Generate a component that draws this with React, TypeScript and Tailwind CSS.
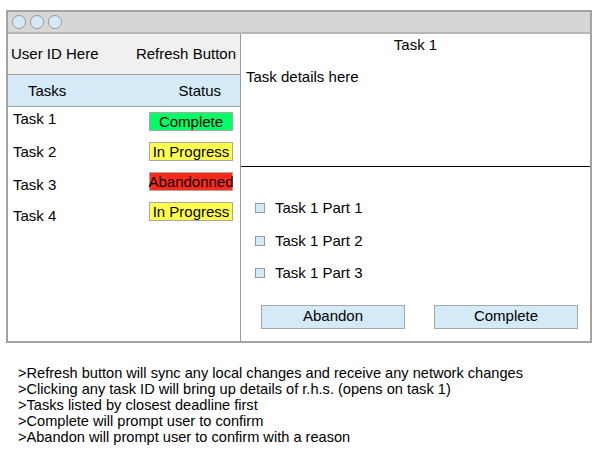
import React from "react";

const font = { fontFamily: '"Liberation Sans", Arial, Helvetica, sans-serif' };

const tasks = [
  { name: "Task 1", status: "Complete", cls: "bg-[#00ff66]", off: -2 },
  { name: "Task 2", status: "In Progress", cls: "bg-[#ffff4d]", off: 1 },
  { name: "Task 3", status: "Abandonned", cls: "bg-[#ff2a1a]", off: 4 },
  { name: "Task 4", status: "In Progress", cls: "bg-[#ffff4d]", off: 5 },
];

export default function App() {
  return (
    <div className="w-[598px] h-[457px] bg-white text-black relative overflow-hidden" style={font}>
      <div className="pt-[10px] pl-[6px]">
        <div className="w-[586px] h-[333px] border-2 border-[#a3a3a3] flex flex-col">
          {/* title bar */}
          <div className="h-[22px] bg-[#d6d6d6] border-b-2 border-[#b7b7b7] flex items-center gap-[4px] pl-[4px] shrink-0">
            <div className="w-[14px] h-[14px] rounded-full bg-[#d4eaf7] border border-[#9a9a9a]" />
            <div className="w-[14px] h-[14px] rounded-full bg-[#d4eaf7] border border-[#9a9a9a]" />
            <div className="w-[14px] h-[14px] rounded-full bg-[#d4eaf7] border border-[#9a9a9a]" />
          </div>
          <div className="flex flex-1 min-h-0">
            {/* left panel */}
            <div className="w-[233px] border-r-[1.5px] border-[#9a9a9a] flex flex-col shrink-0">
              <div className="h-[41px] bg-[#f0f0f0] border-b border-[#a0a0a0] flex items-center justify-between pl-[3px] pr-[4px] text-[15px]">
                <span>User ID Here</span>
                <span>Refresh Button</span>
              </div>
              <div className="h-[32px] bg-[#d4eaf7] border-b border-[#a0a0a0] flex items-center justify-between pl-[20px] pr-[19px] text-[15px]">
                <span className="relative top-[1px]">Tasks</span>
                <span className="relative top-[1px]">Status</span>
              </div>
              <div className="flex flex-col pt-[5px] gap-[12px]">
                {tasks.map((t) => (
                  <div key={t.name} className="flex justify-between items-start h-[18px] pl-[5px] pr-[7px] text-[15px]">
                    <span className="leading-[18px] relative" style={{ top: t.off }}>{t.name}</span>
                    <span className={`w-[84px] h-[19px] border border-[#a8a8a8] flex items-center justify-center leading-none ${t.cls}`}>
                      {t.status}
                    </span>
                  </div>
                ))}
              </div>
            </div>
            {/* right panel */}
            <div className="flex-1 flex flex-col">
              <div className="h-[133px] border-b-[1.5px] border-black flex flex-col text-[15px]">
                <div className="text-center pt-[2px] leading-[18px]">Task 1</div>
                <div className="pl-[5px] pt-[14px] leading-[18px]">Task details here</div>
              </div>
              <div className="flex flex-col pt-[32px] pl-[14px] text-[15px]">
                {["Task 1 Part 1", "Task 1 Part 2", "Task 1 Part 3"].map((p) => (
                  <div key={p} className="flex items-center h-[18px] mb-[14.5px]">
                    <div className="w-[10px] h-[10px] bg-[#d4eaf7] border border-[#9a9a9a]" />
                    <span className="ml-[10px] leading-[18px]">{p}</span>
                  </div>
                ))}
              </div>
              <div className="flex justify-between pl-[20px] pr-[12px] pt-[8px]">
                <div className="w-[144px] h-[24px] bg-[#d4eaf7] border border-[#a8a8a8] flex items-center justify-center text-[15px]">
                  Abandon
                </div>
                <div className="w-[144px] h-[24px] bg-[#d4eaf7] border border-[#a8a8a8] flex items-center justify-center text-[15px]">
                  Complete
                </div>
              </div>
            </div>
          </div>
        </div>
      </div>
      <div className="pl-[18px] pt-[22px] text-[14.6px] leading-[16px]">
        <div>&gt;Refresh button will sync any local changes and receive any network changes</div>
        <div>&gt;Clicking any task ID will bring up details of r.h.s. (opens on task 1)</div>
        <div>&gt;Tasks listed by closest deadline first</div>
        <div>&gt;Complete will prompt user to confirm</div>
        <div>&gt;Abandon will prompt user to confirm with a reason</div>
      </div>
    </div>
  );
}
